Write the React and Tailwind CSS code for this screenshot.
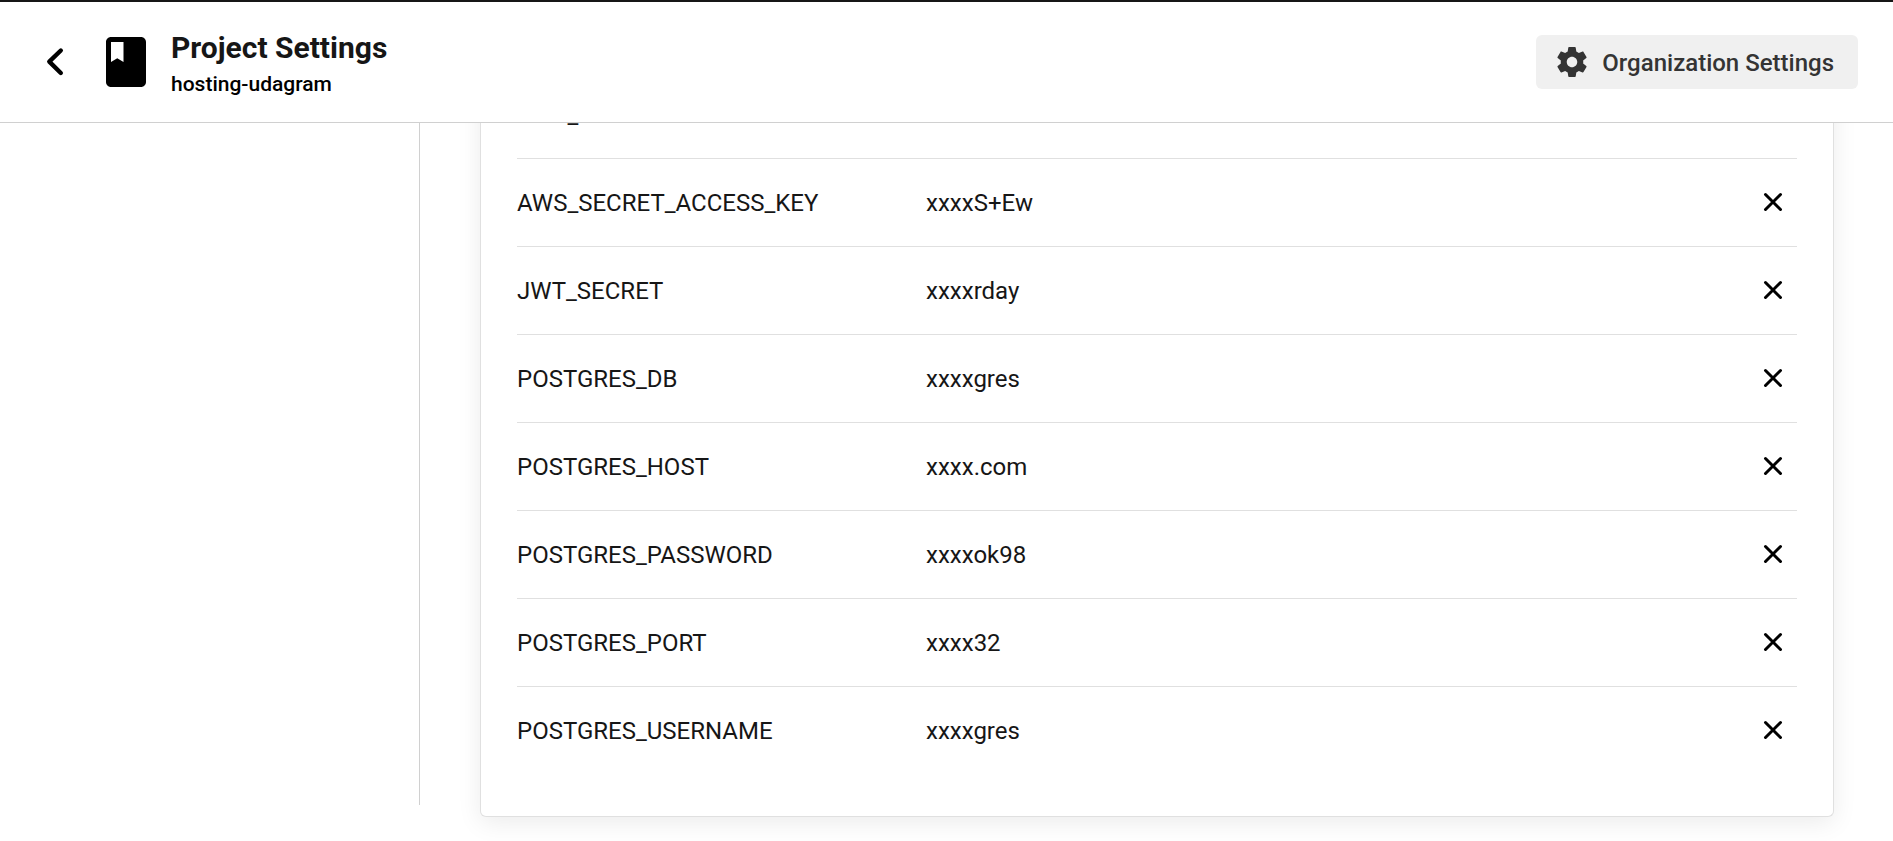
import React from "react";
import { MdBook } from "react-icons/md";

const variables = [
  { name: "AWS_REGION", value: "" },
  { name: "AWS_SECRET_ACCESS_KEY", value: "xxxxS+Ew" },
  { name: "JWT_SECRET", value: "xxxxrday" },
  { name: "POSTGRES_DB", value: "xxxxgres" },
  { name: "POSTGRES_HOST", value: "xxxx.com" },
  { name: "POSTGRES_PASSWORD", value: "xxxxok98" },
  { name: "POSTGRES_PORT", value: "xxxx32" },
  { name: "POSTGRES_USERNAME", value: "xxxxgres" },
];

function GearIcon() {
  return (
    <svg viewBox="0 0 24 24" className="size-9" fill="currentColor" aria-hidden="true">
      <path d="M19.43 12.98c.04-.32.07-.64.07-.98s-.03-.66-.07-.98l2.11-1.65c.19-.15.24-.42.12-.64l-2-3.46c-.12-.22-.39-.3-.61-.22l-2.49 1c-.52-.4-1.08-.73-1.69-.98l-.38-2.65C14.46 2.18 14.25 2 14 2h-4c-.25 0-.46.18-.49.42l-.38 2.65c-.61.25-1.17.59-1.69.98l-2.49-1c-.23-.09-.49 0-.61.22l-2 3.46c-.13.22-.07.49.12.64l2.11 1.65c-.04.32-.07.65-.07.98s.03.66.07.98l-2.11 1.65c-.19.15-.24.42-.12.64l2 3.46c.12.22.39.3.61.22l2.49-1c.52.4 1.08.73 1.69.98l.38 2.65c.03.24.24.42.49.42h4c.25 0 .46-.18.49-.42l.38-2.65c.61-.25 1.17-.59 1.69-.98l2.49 1c.23.09.49 0 .61-.22l2-3.46c.12-.22.07-.49-.12-.64l-2.11-1.65zM12 15.5c-1.93 0-3.5-1.57-3.5-3.5s1.57-3.5 3.5-3.5 3.5 1.57 3.5 3.5-1.57 3.5-3.5 3.5z" />
    </svg>
  );
}

function Header() {
  return (
    <header className="flex items-center justify-between border-t-2 border-b border-t-[#161616] border-b-[#d0d0d0] bg-white pr-[35px] pl-10">
      <div className="flex items-center">
        <button type="button" aria-label="Back" className="flex size-8 items-center justify-center">
          <svg viewBox="0 0 32 32" className="size-8" fill="none" stroke="#000" strokeWidth="4.4" strokeLinecap="round" strokeLinejoin="round">
            <path d="M20.800 4.500 9.300 15.600 20.800 27" />
          </svg>
        </button>
        <MdBook className="ml-6 size-15 text-black" aria-hidden="true" />
        <div className="ml-[15px] flex h-30 flex-col justify-center pt-2">
          <h1 className="text-[30px] leading-9 font-bold text-[#161616]">Project Settings</h1>
          <p className="text-[21px] leading-9 font-medium text-black">hosting-udagram</p>
        </div>
      </div>
      <button type="button" className="flex h-[54px] items-center gap-3 rounded-md bg-[#f0f0f0] pr-6 pl-[18px] text-2xl font-medium text-[#343434]">
        <GearIcon />
        <span className="pt-0.5">Organization Settings</span>
      </button>
    </header>
  );
}

function VariableRow({ name, value }) {
  return (
    <tr className="h-22 border-b border-[#e0e0e0] last:border-transparent">
      <td className="w-[409px] px-0 pt-0.5 pb-0">{name}</td>
      <td className="px-0 pt-0.5 pb-0">{value}</td>
      <td className="w-12 p-0">
        <button type="button" aria-label={`Delete ${name}`} className="flex size-12 items-center justify-center">
          <svg viewBox="0 0 24 24" className="size-6" fill="none" stroke="#000" strokeWidth="3" strokeLinecap="round">
            <path d="M4.500 4.500l15 15M19.500 4.500l-15 15" />
          </svg>
        </button>
      </td>
    </tr>
  );
}

export default function App() {
  return (
    <div className="flex h-screen flex-col overflow-hidden bg-white font-[Roboto,sans-serif] text-[#161616]">
      <Header />
      <main className="flex min-h-0 flex-1 items-start overflow-hidden pr-[59px]">
        <aside className="mr-15 w-[420px] shrink-0 self-stretch pb-9">
          <div className="h-full border-r border-[#d0d0d0]" />
        </aside>
        <section className="-mt-[53px] flex-1 rounded-md border border-t-0 border-[#e0e0e0] bg-white px-9 pb-[41px] shadow-[0_6px_24px_rgba(0,0,0,0.08)]">
          <table className="w-full border-collapse text-left text-2xl" aria-label="Environment variables">
            <tbody>
              {variables.map((v) => (
                <VariableRow key={v.name} {...v} />
              ))}
            </tbody>
          </table>
        </section>
      </main>
    </div>
  );
}
